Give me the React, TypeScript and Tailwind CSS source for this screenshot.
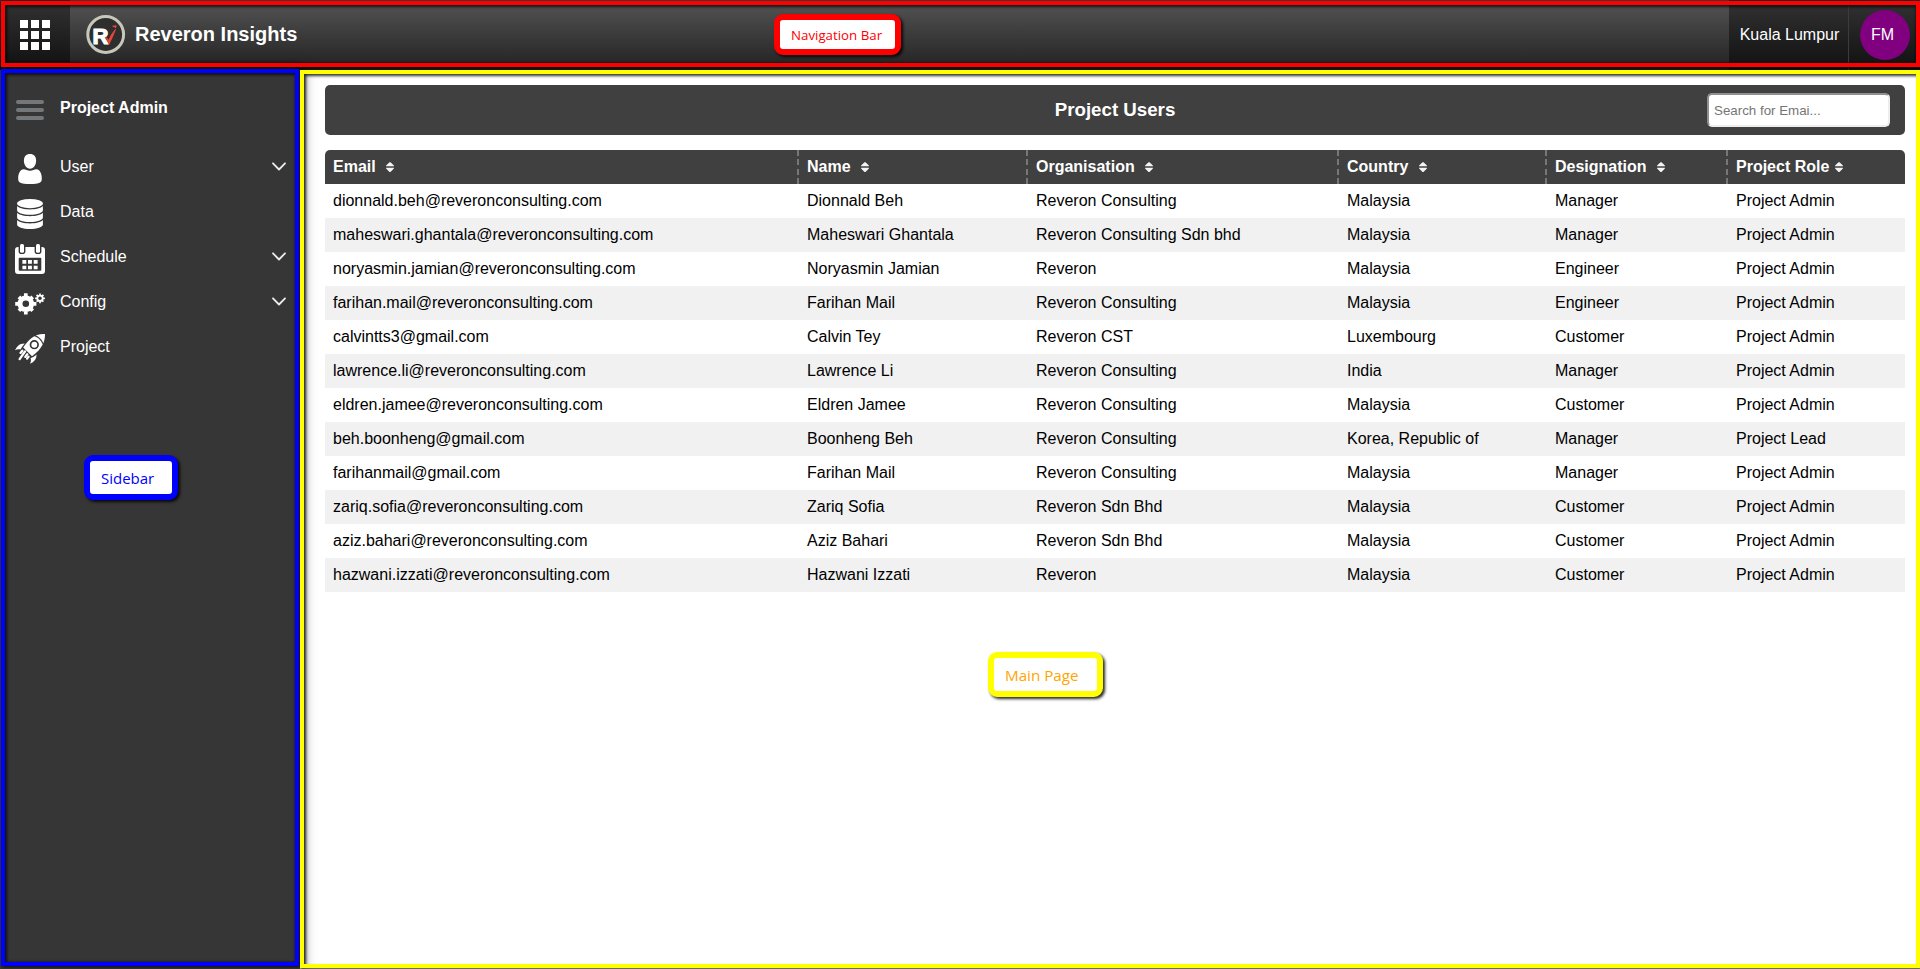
import React from "react";

const columns = [
  { label: "Email", gap: "ml-[10px]" },
  { label: "Name", gap: "ml-[10px]" },
  { label: "Organisation", gap: "ml-[10px]" },
  { label: "Country", gap: "ml-[11px]" },
  { label: "Designation", gap: "ml-[10px]" },
  { label: "Project Role", gap: "ml-[6px]" },
];

const users = [
  ["dionnald.beh@reveronconsulting.com", "Dionnald Beh", "Reveron Consulting", "Malaysia", "Manager", "Project Admin"],
  ["maheswari.ghantala@reveronconsulting.com", "Maheswari Ghantala", "Reveron Consulting Sdn bhd", "Malaysia", "Manager", "Project Admin"],
  ["noryasmin.jamian@reveronconsulting.com", "Noryasmin Jamian", "Reveron", "Malaysia", "Engineer", "Project Admin"],
  ["farihan.mail@reveronconsulting.com", "Farihan Mail", "Reveron Consulting", "Malaysia", "Engineer", "Project Admin"],
  ["calvintts3@gmail.com", "Calvin Tey", "Reveron CST", "Luxembourg", "Customer", "Project Admin"],
  ["lawrence.li@reveronconsulting.com", "Lawrence Li", "Reveron Consulting", "India", "Manager", "Project Admin"],
  ["eldren.jamee@reveronconsulting.com", "Eldren Jamee", "Reveron Consulting", "Malaysia", "Customer", "Project Admin"],
  ["beh.boonheng@gmail.com", "Boonheng Beh", "Reveron Consulting", "Korea, Republic of", "Manager", "Project Lead"],
  ["farihanmail@gmail.com", "Farihan Mail", "Reveron Consulting", "Malaysia", "Manager", "Project Admin"],
  ["zariq.sofia@reveronconsulting.com", "Zariq Sofia", "Reveron Sdn Bhd", "Malaysia", "Customer", "Project Admin"],
  ["aziz.bahari@reveronconsulting.com", "Aziz Bahari", "Reveron Sdn Bhd", "Malaysia", "Customer", "Project Admin"],
  ["hazwani.izzati@reveronconsulting.com", "Hazwani Izzati", "Reveron", "Malaysia", "Customer", "Project Admin"],
];

const rowGrid = "grid grid-cols-[474px_229px_311px_208px_181px_177px]";

function Logo() {
  return (
    <svg width="40" height="40" viewBox="0 0 40 40">
      <circle cx="19.700" cy="19.500" r="17.900" fill="#2e2e2e" stroke="#c6c8b9" strokeWidth="3" />
      <text x="6.500" y="28.600" fontFamily="Liberation Sans, Arial, sans-serif" fontWeight="700" fontSize="22" fill="#fff" stroke="#fff" strokeWidth="1.200">R</text>
      <path d="M20.300 22.600 L22.800 25.400 Q25 19 29.400 14.600 Q26 23.500 23 29 Z" fill="#e8463c" stroke="#e8463c" strokeWidth="1" />
      <path d="M26.600 11.200h2.600M29 13l1.200-2.600" stroke="#d24a41" strokeWidth="1.600" />
    </svg>
  );
}

function UserIcon() {
  return (
    <svg width="30" height="30" viewBox="0 0 30 30" fill="#fff">
      <path d="M15 0c3.900 0 6.100 2.500 6.100 6.600 0 4.400-2.400 8.200-6.100 8.200s-6.100-3.800-6.100-8.200C8.900 2.500 11.100 0 15 0z" />
      <path d="M8.700 15.300c2 0 3.700 1.500 6.300 1.500s4.300-1.500 6.300-1.500c3.700 0 5.500 4.700 5.500 8.900 0 2.300-.3 3.500-1.700 4.200C23.100 29.500 19.500 30 15 30s-8.100-.5-10.100-1.600c-1.400-.7-1.700-1.900-1.700-4.200 0-4.200 1.800-8.900 5.500-8.900z" />
    </svg>
  );
}

function DataIcon() {
  return (
    <svg width="30" height="30" viewBox="0 0 30 30" fill="#fff">
      <ellipse cx="15" cy="4.600" rx="12.900" ry="4.600" />
      <path d="M2.100 7.100C4 9.400 9.500 10.500 15 10.500S26 9.400 27.900 7.100v4.100c0 2.600-5.800 4.600-12.900 4.600S2.100 13.800 2.100 11.200z" />
      <path d="M2.100 13.800c1.900 2.300 7.400 3.400 12.900 3.400s11-1.100 12.900-3.400v4.600C27.900 21 22.100 23 15 23S2.100 21 2.100 18.400z" />
      <path d="M2.100 21c1.900 2.300 7.400 3.400 12.900 3.400S26 23.300 27.900 21v4.400C27.900 28 22.100 30 15 30S2.100 28 2.100 25.400z" />
    </svg>
  );
}

function ScheduleIcon() {
  return (
    <svg width="30" height="30" viewBox="0 0 30 30">
      <path d="M3 2.900h24a3 3 0 0 1 3 3V27a3 3 0 0 1-3 3H3a3 3 0 0 1-3-3V5.900a3 3 0 0 1 3-3z" fill="#fff" />
      <rect x="3.600" y="-2" width="6.800" height="12" rx="2.800" fill="#363636" />
      <rect x="19.600" y="-2" width="6.800" height="12" rx="2.800" fill="#363636" />
      <rect x="5" y="0" width="4" height="8.700" rx="1.500" fill="#fff" />
      <rect x="21" y="0" width="4" height="8.700" rx="1.500" fill="#fff" />
      <rect x="3.700" y="13.700" width="22.600" height="13" rx="1" fill="#363636" />
      <path d="M7.400 16h3.900v3.700H7.400zM13 16h3.900v3.700H13zM18.700 16h3.900v3.700h-3.900zM7.400 21.700h3.900v3.600H7.400zM13 21.700h3.900v3.600H13zM18.700 21.700h3.900v3.600h-3.900z" fill="#fff" />
    </svg>
  );
}

function ConfigIcon() {
  return (
    <svg width="30" height="30" viewBox="0 0 30 30" fill="none" stroke="#fff">
      <circle cx="10.800" cy="14.800" r="5.800" strokeWidth="5" />
      <path
        d="M10.800 4.200v3M10.800 22.400v3M.2 14.800h3M18.400 14.800h3M3.900 7.900l2 2M15.700 19.700l2 2M3.900 21.700l2-2M15.700 9.900l2-2"
        strokeWidth="3.700"
      />
      <circle cx="25" cy="9.300" r="2.700" strokeWidth="1.800" />
      <path
        d="M25 4.400v2M25 12.200v2M20.100 9.300h2M27.900 9.300h2M21.600 5.900l1.300 1.300M27.100 11.400l1.300 1.300M21.600 12.700l1.300-1.300M27.100 7.200l1.300-1.300"
        strokeWidth="1.700"
      />
    </svg>
  );
}

function ProjectIcon() {
  return (
    <svg width="30" height="30" viewBox="0 0 30 30">
      <path d="M20.700 1.600C23.500.3 27 0 30 0c0 3-.3 6.200-1.700 9.300-.6-1.700-1.500-3.200-2.800-4.500-1.400-1.500-3-2.600-4.800-3.200z" fill="#fff" />
      <path d="M19.300 2.300c2 .5 3.800 1.600 5.300 3.100 1.500 1.500 2.500 3.200 3.100 5.200-2 4-6 8.500-10.700 11.700L8.200 13.600C11 9 15.200 4.500 19.300 2.300z" fill="#fff" />
      <circle cx="19.300" cy="10.700" r="3.800" fill="#fff" stroke="#363636" strokeWidth="1.700" />
      <path d="M7.300 9.700c-3 .3-5.600 2.500-7.300 6.600 1.800-1 3.600-1.300 5.500-.7 1.300-2.200 2.700-4.200 4.300-6zM21.500 21.800c-.2 3.400-2.300 6.100-6.400 8 .9-2 1.100-3.800.5-5.700 2-.9 4.200-2 5.900-3.700z" fill="#fff" />
      <path d="M10 17.500l-5.400 7.600M12.300 20.300l-2 2.600M7.300 16.700l-1.800 2.200M13.600 22.600l-1.500 2" stroke="#fff" strokeWidth="2.300" strokeLinecap="round" />
    </svg>
  );
}

function Chevron() {
  return (
    <svg width="14" height="9" viewBox="0 0 14 9" fill="none" stroke="#ececec" strokeWidth="1.800" strokeLinecap="round" strokeLinejoin="round">
      <path d="M1 1.300l6 6.200 6-6.200" />
    </svg>
  );
}

function SortIcon() {
  return (
    <svg width="8" height="10" viewBox="0 0 8 10" fill="#f4f4f4">
      <path d="M3.500.2h1L7.900 3.500v.7H.1v-.7zM3.500 9.900h1l3.400-3.400v-.7H.1v.7z" />
    </svg>
  );
}

const menu = [
  { label: "User", icon: <UserIcon />, expandable: true },
  { label: "Data", icon: <DataIcon />, expandable: false },
  { label: "Schedule", icon: <ScheduleIcon />, expandable: true },
  { label: "Config", icon: <ConfigIcon />, expandable: true },
  { label: "Project", icon: <ProjectIcon />, expandable: false },
];

function NavBar() {
  return (
    <header className="flex h-[70px] w-full shrink-0 bg-linear-to-b from-[#555] to-[#222] text-white">
      <div className="flex w-[70px] items-center justify-center bg-linear-to-b from-[#333] to-[#111]">
        <div className="grid grid-cols-3 gap-[3px]">
          {Array.from({ length: 9 }, (_, i) => (
            <span key={i} className="size-2 bg-white" />
          ))}
        </div>
      </div>
      <div className="flex flex-1 items-center pl-4">
        <Logo />
        <h1 className="mb-[2px] ml-[9px] text-[20px] leading-6 font-bold">Reveron Insights</h1>
      </div>
      <div className="flex w-[120px] items-center justify-center border-r border-[#3c3c3c] bg-linear-to-b from-[#333] to-[#111] pl-[2px]">
        Kuala Lumpur
      </div>
      <div className="flex w-[71px] items-center bg-linear-to-b from-[#333] to-[#111] pl-[11px]">
        <span className="flex size-[50px] items-center justify-center rounded-full bg-[#800080] pr-[5px]">FM</span>
      </div>
    </header>
  );
}

function Sidebar() {
  return (
    <aside className="relative z-10 w-[300px] shrink-0 bg-[#363636] text-white shadow-[0_0_12px_2px_rgba(0,0,0,0.7)]">
      <div className="flex h-[75px] items-center pt-1 pl-4">
        <div className="flex w-[28px] flex-col gap-1">
          <span className="h-1 rounded-full bg-[#74777a]" />
          <span className="h-1 rounded-full bg-[#74777a]" />
          <span className="h-1 rounded-full bg-[#74777a]" />
        </div>
        <h2 className="mb-1 ml-4 font-bold">Project Admin</h2>
      </div>
      <nav>
        {menu.map((item) => (
          <div key={item.label} className="flex h-[45px] items-center pr-[14px] pl-[15px]">
            <span className="mt-[3px]">{item.icon}</span>
            <span className="mb-px ml-[15px] flex-1">{item.label}</span>
            {item.expandable && (
              <span className="mb-[3px]">
                <Chevron />
              </span>
            )}
          </div>
        ))}
      </nav>
    </aside>
  );
}

function UsersTable() {
  return (
    <section className="mt-[15px]">
      <div className={`${rowGrid} h-[34px] overflow-hidden rounded-t-[5px] bg-[#404040] font-bold text-white`}>
        {columns.map((column, i) => (
          <div key={column.label} className="flex items-center pl-2">
            <span className="whitespace-nowrap">{column.label}</span>
            <span className={column.gap}>
              <SortIcon />
            </span>
            {i < columns.length - 1 && (
              <span className="ml-auto h-full w-[2px] bg-[repeating-linear-gradient(to_bottom,#777_0px,#777_6px,transparent_6px,transparent_9.300px)]" />
            )}
          </div>
        ))}
      </div>
      {users.map((user) => (
        <div key={user[0]} className={`${rowGrid} h-[34px] items-center pb-px text-black even:bg-white odd:bg-[#f1f1f1]`}>
          {user.map((value, i) => (
            <span key={i} className="pl-2 whitespace-nowrap">
              {value}
            </span>
          ))}
        </div>
      ))}
    </section>
  );
}

function MainPage() {
  return (
    <main className="flex-1 bg-white pt-[15px] pr-[15px] pl-[25px]">
      <div className="grid h-[50px] grid-cols-[1fr_auto_1fr] items-center rounded-[5px] bg-[#404040] pr-[15px]">
        <span />
        <h2 className="pl-[15px] text-[18.720px] font-bold text-white">Project Users</h2>
        <input
          placeholder="Search for Emai..."
          className="h-[34px] w-[183px] justify-self-end rounded-[5px] border-2 border-t-[#909090] border-r-[#ededed] border-b-[#ededed] border-l-[#909090] bg-white px-[5px] text-[13.333px] placeholder:text-[#757575]"
        />
      </div>
      <UsersTable />
    </main>
  );
}

function Annotations() {
  return (
    <div className="pointer-events-none absolute inset-0 z-20 overflow-hidden font-['Open_Sans','Noto_Sans',sans-serif]">
      <div className="absolute top-px left-px h-[66px] w-[1919px] border-4 border-[#ff0000] shadow-[1px_1px_3px_1px_rgba(0,0,0,0.85),inset_1px_1px_3px_1px_rgba(0,0,0,0.75)]" />
      <div className="absolute top-[69px] left-px h-[897px] w-[298px] border-4 border-[#0000ff] shadow-[1px_1px_3px_rgba(0,0,0,0.85),inset_1px_1px_3px_1px_rgba(0,0,0,0.75)]" />
      <div className="absolute top-[70px] left-[300px] h-[898px] w-[1620px] border-4 border-[#ffff00] shadow-[1px_1px_2px_rgba(0,0,0,0.85),inset_2px_2px_3px_rgba(0,0,0,0.8)]" />
      <div className="absolute top-[14px] left-[774px] flex h-[41px] w-[127px] items-center rounded-[9px] border-6 border-[#ff0000] bg-white pt-[3px] pl-[11px] text-[13.300px] whitespace-nowrap text-[#ff0000] shadow-[2px_2px_3px_rgba(0,0,0,0.85)]">
        Navigation Bar
      </div>
      <div className="absolute top-[455px] left-[84px] flex h-[45px] w-[94px] items-center rounded-[9px] border-6 border-[#0000ff] bg-white pt-px pl-[11px] text-[15px] whitespace-nowrap text-[#0000ff] shadow-[2px_2px_3px_rgba(0,0,0,0.85)]">
        Sidebar
      </div>
      <div className="absolute top-[652px] left-[988px] flex h-[45px] w-[115px] items-center rounded-[9px] border-6 border-[#ffff00] bg-white pt-px pl-[11px] text-[15.200px] whitespace-nowrap text-[#ffa500] shadow-[2px_2px_3px_rgba(0,0,0,0.85)]">
        Main Page
      </div>
    </div>
  );
}

export default function App() {
  return (
    <div className="relative flex h-[969px] w-[1920px] flex-col overflow-hidden bg-white font-['Liberation_Sans',Arial,sans-serif] text-base">
      <NavBar />
      <div className="flex flex-1">
        <Sidebar />
        <MainPage />
      </div>
      <Annotations />
    </div>
  );
}
